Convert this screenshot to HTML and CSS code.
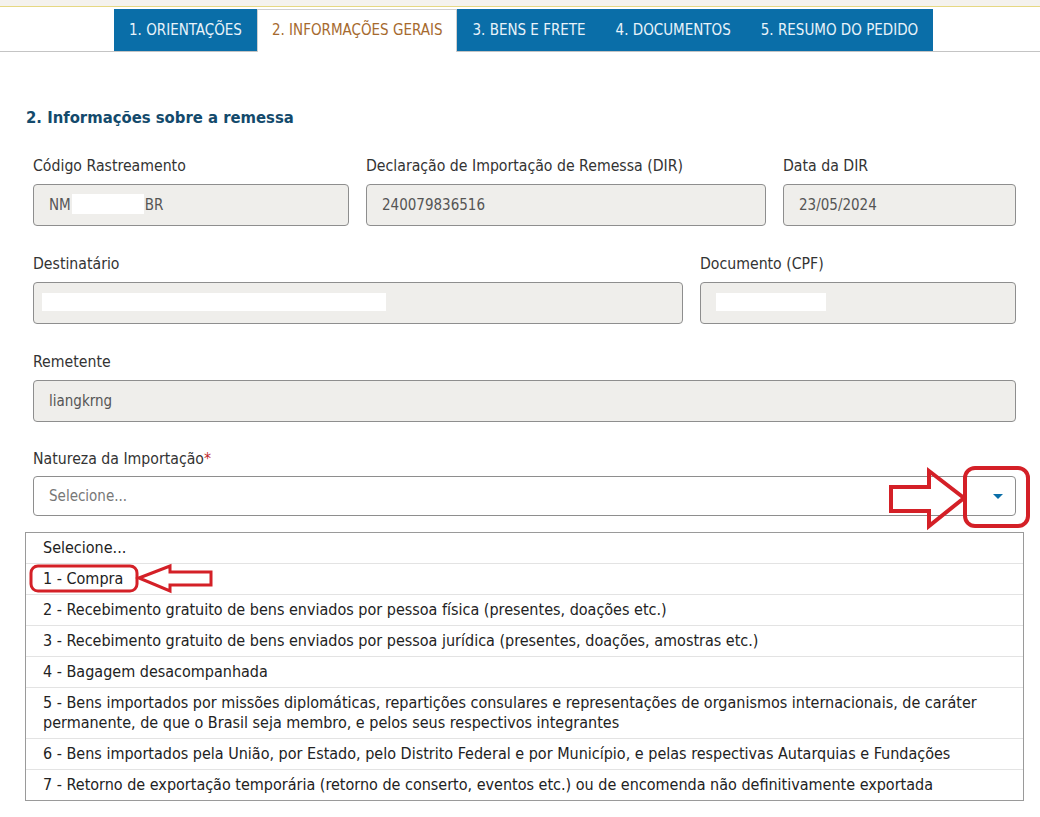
FILE: index.html
```html
<!DOCTYPE html>
<html lang="pt-BR">
<head>
    <meta charset="UTF-8">
    <meta name="viewport" content="width=device-width, initial-scale=1.0">
    <title>Informações Gerais</title>
    <link rel="stylesheet" href="styles.css">
</head>
<body>

    <div class="topbar"></div>

    <div class="tabs">
        <div class="tab">1. ORIENTAÇÕES</div>
        <div class="tab active">2. INFORMAÇÕES GERAIS</div>
        <div class="tab">3. BENS E FRETE</div>
        <div class="tab">4. DOCUMENTOS</div>
        <div class="tab">5. RESUMO DO PEDIDO</div>
    </div>

    <div class="content">
        <h2 class="section-title">2. Informações sobre a remessa</h2>

        <div class="row row-3">
            <div class="field">
                <label>Código Rastreamento</label>
                <div class="box">NM<span class="hide hide-code"></span>BR</div>
            </div>
            <div class="field">
                <label>Declaração de Importação de Remessa (DIR)</label>
                <div class="box">240079836516</div>
            </div>
            <div class="field">
                <label>Data da DIR</label>
                <div class="box">23/05/2024</div>
            </div>
        </div>

        <div class="row row-2">
            <div class="field">
                <label>Destinatário</label>
                <div class="box box-hidden"><span class="hide hide-name"></span></div>
            </div>
            <div class="field">
                <label>Documento (CPF)</label>
                <div class="box box-hidden"><span class="hide hide-cpf"></span></div>
            </div>
        </div>

        <div class="row">
            <div class="field">
                <label>Remetente</label>
                <div class="box">liangkrng</div>
            </div>
        </div>

        <div class="row row-select">
            <div class="field">
                <label>Natureza da Importação<span class="req">*</span></label>
                <div class="select">
                    <span class="placeholder">Selecione...</span>
                    <span class="caret"></span>
                </div>
            </div>
        </div>

        <ul class="options">
            <li>Selecione...</li>
            <li>1 - Compra</li>
            <li>2 - Recebimento gratuito de bens enviados por pessoa física (presentes, doações etc.)</li>
            <li>3 - Recebimento gratuito de bens enviados por pessoa jurídica (presentes, doações, amostras etc.)</li>
            <li>4 - Bagagem desacompanhada</li>
            <li>5 - Bens importados por missões diplomáticas, repartições consulares e representações de organismos internacionais, de caráter permanente, de que o Brasil seja membro, e pelos seus respectivos integrantes</li>
            <li>6 - Bens importados pela União, por Estado, pelo Distrito Federal e por Município, e pelas respectivas Autarquias e Fundações</li>
            <li>7 - Retorno de exportação temporária (retorno de conserto, eventos etc.) ou de encomenda não definitivamente exportada</li>
        </ul>
    </div>

    <!-- marcações em vermelho feitas sobre a captura -->
    <svg class="marks" width="1040" height="817" viewBox="0 0 1040 817">
        <path d="M891 487 H929 V471 L964 498 L929 526 V511 H891 Z" fill="none" stroke="#d42027" stroke-width="4" stroke-linejoin="miter"/>
        <rect x="965" y="468" width="63" height="58" rx="10" fill="none" stroke="#d42027" stroke-width="4"/>
        <rect x="31" y="566" width="106" height="25" rx="7" fill="none" stroke="#d42027" stroke-width="3"/>
        <path d="M139 578 L170 566 V572 H211 V585 H170 V591 Z" fill="none" stroke="#d42027" stroke-width="3" stroke-linejoin="miter"/>
    </svg>

</body>
</html>
```

FILE: styles.css
```css
body {
    margin: 0;
    font-family: "DejaVu Sans Condensed", "DejaVu Sans", sans-serif;
    font-size: 15px;
    color: #333;
    background-color: #ffffff;
    position: relative;
    width: 1040px;
    height: 817px;
    overflow: hidden;
}
.topbar {
    height: 6px;
    background-color: #f4f2ee;
    border-bottom: 1px solid #e6d883;
}
.tabs {
    display: flex;
    padding-left: 114px;
    margin-top: 2px;
    border-bottom: 1px solid #c4c4c4;
}
.tab {
    background-color: #0a6ea8;
    color: #e8f3fa;
    padding: 0 15px;
    height: 42px;
    line-height: 42px;
    margin-bottom: -1px;
    font-size: 15px;
}
.tab.active {
    background-color: #ffffff;
    color: #a66a2e;
    border: 1px solid #cfcfcf;
    border-bottom: none;
    line-height: 40px;
    padding: 0 14px;
}
.content {
    padding: 0 24px 0 33px;
}
.section-title {
    margin: 56px 0 30px -7px;
    font-size: 16.5px;
    font-weight: bold;
    color: #134a6c;
}
.row {
    display: grid;
    gap: 17px;
    margin-bottom: 29px;
}
.row-3 {
    grid-template-columns: 316px 400px 1fr;
}
.row-2 {
    grid-template-columns: 650px 1fr;
}
.row-select {
    margin-top: -1px;
}
.row-select label {
    margin-bottom: 8px;
}
label {
    display: block;
    margin-bottom: 9px;
    line-height: 18px;
    font-size: 15.7px;
}
.req {
    color: #c0282d;
}
.box {
    height: 40px;
    line-height: 40px;
    background-color: #efeeeb;
    border: 1px solid #8e8e8e;
    border-radius: 4px;
    padding: 0 15px;
    color: #555;
}
.box-hidden {
    padding: 0 8px;
}
.hide {
    display: inline-block;
    background-color: #ffffff;
    vertical-align: middle;
}
.hide-code {
    width: 72px;
    height: 20px;
    margin: -4px 1px 0;
}
.hide-name {
    width: 344px;
    height: 18px;
    margin-top: -4px;
}
.hide-cpf {
    width: 110px;
    height: 18px;
    margin: -4px 0 0 7px;
}
.select {
    display: flex;
    align-items: center;
    justify-content: space-between;
    height: 38px;
    border: 1px solid #8e8e8e;
    border-radius: 4px;
    padding: 0 12px 0 15px;
    background-color: #ffffff;
}
.placeholder {
    color: #777;
}
.caret {
    width: 0;
    height: 0;
    border-left: 5px solid transparent;
    border-right: 5px solid transparent;
    border-top: 5px solid #0a6ea8;
}
.options {
    list-style: none;
    margin: -13px -8px 0 -8px;
    padding: 0;
    border: 1px solid #9a9a9a;
    font-size: 16px;
}
.options li {
    padding: 5px 17px;
    line-height: 20px;
    border-bottom: 1px solid #e3e3e3;
    color: #222;
}
.options li:last-child {
    border-bottom: none;
}
.marks {
    position: absolute;
    left: 0;
    top: 0;
    pointer-events: none;
}
```
